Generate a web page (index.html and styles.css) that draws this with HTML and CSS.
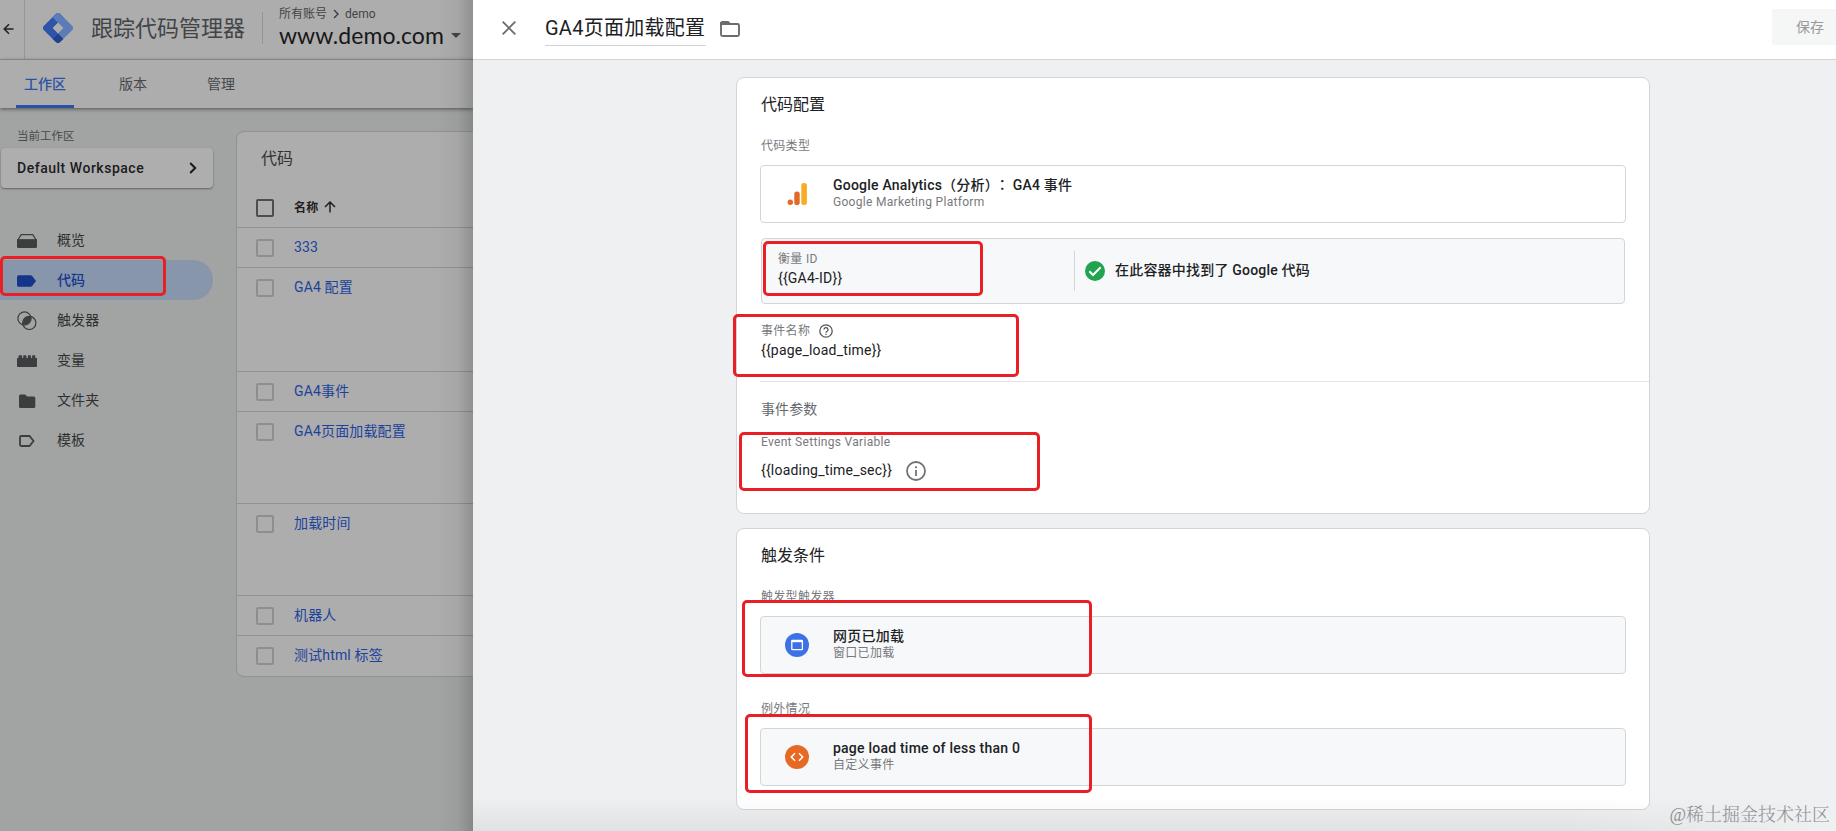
FILE: index.html
```html
<!DOCTYPE html>
<html lang="zh-CN">
<head>
<meta charset="utf-8">
<title>跟踪代码管理器</title>
<link rel="stylesheet" href="styles.css">
</head>
<body>
<div class="app">
  <div class="workspace">
    <header class="topbar">
      <div class="back"><svg width="12" height="12" viewBox="0 0 12 12" fill="none" stroke="#202122" stroke-width="1.5"><path d="M10.5 6H1.5M6 1.2 1.2 6 6 10.8"/></svg></div>
      <svg class="logo" width="30" height="30" viewBox="0 0 30 30"><path d="M12.700 1 1 12.700a3.200 3.200 0 0 0 0 4.600L9.500 25.800 15 20.200 9.800 15 20.700 4.400 17.300 1a3.200 3.200 0 0 0-4.600 0z" fill="#2c55aa"/><path d="M12.700 1a3.200 3.200 0 0 1 4.600 0L29 12.700a3.200 3.200 0 0 1 0 4.600L20.700 25.600 15 20.200 20.200 15 9.500 4.200z" fill="#5b7cb8"/><path d="M9.400 25.700 15 20.200l5.600 5.500-3.300 3.300a3.200 3.200 0 0 1-4.600 0z" fill="#1d418f"/><path d="M15 9.800 20.200 15 15 20.200 9.800 15z" fill="#adadad"/></svg>
      <div class="product">跟踪代码管理器</div>
      <div class="account">
        <div class="crumb">所有账号 <svg width="6" height="10" viewBox="0 0 6 10" fill="none" stroke="#393b3d" stroke-width="1.400"><path d="m1 1 4 4-4 4"/></svg> <span>demo</span></div>
        <div class="site"><span>www.demo.com</span><i class="caret"></i></div>
      </div>
    </header>
    <nav class="tabs"><a class="tab on">工作区</a><a class="tab">版本</a><a class="tab">管理</a></nav>
    <div class="body">
      <aside class="side">
        <div class="ws-label">当前工作区</div>
        <div class="ws-card"><span>Default Workspace</span><svg width="8" height="12" viewBox="0 0 8 12" fill="none" stroke="#18191a" stroke-width="2"><path d="m1.200 1 5 5-5 5"/></svg></div>
        <ul class="menu">
          <li><svg width="20" height="20" viewBox="0 0 20 20"><path d="M4.200 4.600h11.600l3.400 5.400H.8z" fill="none" stroke="#3b3d3e" stroke-width="1.200"/><path d="M0 9.300h20v7.200q0 1.500-1.500 1.500h-17Q0 18 0 16.500z" fill="#3b3d3e"/></svg>概览</li>
          <li class="on"><svg width="20" height="20" viewBox="0 0 20 20"><path d="M1.500 5.200h12q1 0 1.700.8l3.800 5-3.800 5q-.7.800-1.700.800h-12Q0 16.800 0 15.300V6.700q0-1.500 1.500-1.500z" fill="#16358a"/></svg>代码</li>
          <li><svg width="20" height="20" viewBox="0 0 20 20"><g fill="none" stroke="#3b3d3e" stroke-width="1.200"><circle cx="7.500" cy="8.500" r="6.600"/><circle cx="12.300" cy="12.900" r="6.600"/></g><path d="M14 6.600c.6 4.900-2.700 8.200-8.100 8.300-.6-5 2.700-8.400 8.100-8.300z" fill="#3b3d3e"/></svg>触发器</li>
          <li><svg width="20" height="20" viewBox="0 0 20 20"><path d="M0 8h1.500V6q0-.8.800-.8h2q.8 0 .8.800v2h1.100V6q0-.8.800-.8h1.600q.8 0 .8.800v2h1.400V6q0-.8.800-.8h1.600q.8 0 .8.800v2h1.100V6q0-.8.800-.8h1.600q.8 0 .8.800v2H20v8q0 1-1 1H1q-1 0-1-1z" fill="#3b3d3e"/></svg>变量</li>
          <li><svg width="20" height="20" viewBox="0 0 20 20"><path d="M3.500 4.500h4.700l2 2h6.600q1.500 0 1.500 1.500v8.500q0 1.500-1.500 1.500H3.500Q2 18 2 16.500V6q0-1.500 1.500-1.500z" fill="#3b3d3e"/></svg>文件夹</li>
          <li><svg width="20" height="20" viewBox="0 0 20 20"><path d="M4.200 6h8.300l4 5-4 5H4.200q-1.200 0-1.200-1.200V7.200Q3 6 4.200 6z" fill="none" stroke="#3b3d3e" stroke-width="1.800"/></svg>模板</li>
        </ul>
      </aside>
      <section class="list">
        <h2>代码</h2>
        <div class="row head"><i class="box"></i><span>名称</span><svg width="12" height="12" viewBox="0 0 12 12" fill="none" stroke="#1f2021" stroke-width="1.500"><path d="M6 11.500v-10M1 6l5-5 5 5"/></svg></div>
        <div class="row"><i class="box"></i><span>333</span></div>
        <div class="row r104"><i class="box"></i><span>GA4 配置</span></div>
        <div class="row"><i class="box"></i><span>GA4事件</span></div>
        <div class="row r92"><i class="box"></i><span>GA4页面加载配置</span></div>
        <div class="row r92"><i class="box"></i><span>加载时间</span></div>
        <div class="row"><i class="box"></i><span>机器人</span></div>
        <div class="row"><i class="box"></i><span>测试html 标签</span></div>
      </section>
    </div>
    <div class="edge"></div>
  </div>

  <main class="drawer">
    <header class="dhead">
      <svg width="14" height="14" viewBox="0 0 14 14" stroke="#6a6d70" stroke-width="1.900"><path d="m.7.7 12.600 12.600M13.300.7.700 13.300"/></svg>
      <h1>GA4页面加载配置</h1>
      <svg class="folder" width="20" height="16" viewBox="0 0 20 16" fill="none" stroke="#6a6d70" stroke-width="1.900"><path d="M1 2.500V13.500q0 1.500 1.500 1.500h15q1.500 0 1.500-1.500V4.500Q19 3 17.500 3H10L8 1H2.500Q1 1 1 2.500z"/><path d="M1 2h7.500l1 1H1z"/></svg>
      <button class="save">保存</button>
    </header>
    <div class="dbody">
      <section class="card config">
        <h3>代码配置</h3>
        <div class="label">代码类型</div>
        <div class="tile white">
          <svg width="24" height="24" viewBox="0 0 24 24"><rect x="16.300" y="1" width="5.600" height="22" rx="2.500" fill="#f9ab25"/><rect x="9.300" y="9.500" width="5.400" height="13.500" rx="2.600" fill="#e06a26"/><circle cx="5.300" cy="20.300" r="2.700" fill="#e06a26"/></svg>
          <div><b>Google Analytics（分析）<span class="colon" lang="zh-TW">：</span> GA4 事件</b><small>Google Marketing Platform</small></div>
        </div>
        <div class="measure">
          <div class="mid"><small>衡量 ID</small><p>{{GA4-ID}}</p></div>
          <div class="found"><svg width="20" height="20" viewBox="0 0 20 20"><circle cx="10" cy="10" r="10" fill="#22a350"/><path d="m4.300 10.300 3.700 3.700 7.700-7.700" fill="none" stroke="#fff" stroke-width="2"/></svg><b>在此容器中找到了 Google 代码</b></div>
        </div>
        <div class="label ev">事件名称<svg width="14" height="14" viewBox="0 0 14 14" fill="none" stroke="#55585b" stroke-width="1.300"><circle cx="7" cy="7" r="6.200"/><path d="M5 5.600a2 2 0 1 1 3.100 1.700C7.300 7.800 7 8.100 7 8.800M7 9.800v1.300"/></svg></div>
        <p class="value">{{page_load_time}}</p>
        <div class="params">
          <h4>事件参数</h4>
          <div class="label esv">Event Settings Variable</div>
          <p class="value load"><span>{{loading_time_sec}}</span><svg width="20" height="20" viewBox="0 0 20 20" fill="none" stroke="#707376" stroke-width="1.800"><circle cx="10" cy="10" r="9"/><path d="M10 9v6M10 5.200v2"/></svg></p>
        </div>
      </section>
      <section class="card trig">
        <h3>触发条件</h3>
        <div class="label">触发型触发器</div>
        <div class="tile">
          <svg width="24" height="24" viewBox="0 0 24 24"><circle cx="12" cy="12" r="12" fill="#3d72e6"/><rect x="6.800" y="7.500" width="10.600" height="9.200" rx=".8" fill="none" stroke="#fff" stroke-width="1.300"/><path d="M6.500 8.200h11" stroke="#fff" stroke-width="2"/></svg>
          <div><b>网页已加载</b><small>窗口已加载</small></div>
        </div>
        <div class="label exc">例外情况</div>
        <div class="tile">
          <svg width="24" height="24" viewBox="0 0 24 24"><circle cx="12" cy="12" r="12" fill="#e66a23"/><path d="M10 8.300 6.300 12l3.700 3.700M14 8.300l3.700 3.700-3.700 3.700" fill="none" stroke="#fff" stroke-width="1.500"/></svg>
          <div><b>page load time of less than 0</b><small>自定义事件</small></div>
        </div>
      </section>
    </div>
    <div class="fade"></div>
  </main>

  <i class="mark m1"></i><i class="mark m2"></i><i class="mark m3"></i><i class="mark m4"></i><i class="mark m5"></i><i class="mark m6"></i>
  <div class="watermark">@稀土掘金技术社区</div>
</div>
</body>
</html>
```
FILE: styles.css
```css
* { box-sizing: border-box; }
body, h1, h2, h3, h4, p, ul { margin: 0; padding: 0; }
body { font-family: Roboto, "Noto Sans CJK SC", sans-serif; font-size: 14px; color: #202124; overflow: hidden; }
svg { display: block; flex: none; }
i { font-style: normal; }
b { font-weight: 500; }
.app { position: relative; width: 1836px; height: 831px; display: grid; grid-template-columns: 473px 1fr; overflow: hidden; }

/* dimmed page behind the drawer */
.workspace { position: relative; background: #a1a4a3; overflow: hidden; display: flex; flex-direction: column; }
.topbar { height: 60px; background: #adadad; border-bottom: 1px solid #959697; display: flex; align-items: flex-start; white-space: nowrap; }
.back { width: 25px; height: 59px; border-right: 1px solid #959697; padding: 23px 0 0 3px; }
.logo { margin: 13px 0 0 18px; }
.product { margin-left: 18px; width: 154px; font-size: 22px; line-height: 32px; padding-top: 13px; color: #424446; }
.account { margin: 12px 0 0 17px; height: 32px; border-left: 1px solid #949596; padding-left: 16px; }
.crumb { display: flex; align-items: center; gap: 6px; font-size: 12px; line-height: 16px; margin-top: -6px; color: #424446; }
.site { display: flex; align-items: center; line-height: 26px; font-family: Lato, sans-serif; font-size: 23px; letter-spacing: .05px; color: #161718; }
.caret { border: 5px solid transparent; border-top-color: #424446; border-bottom: 0; margin-left: 7px; }
.tabs { height: 48px; flex: none; background: #adadad; display: flex; padding-left: 16px; box-shadow: 0 1px 4px rgba(0,0,0,.5); z-index: 1; }
.tab { height: 48px; line-height: 48px; padding: 0 8px; margin-right: 37px; color: #46484a; }
.tab:nth-child(2) { margin-right: 44px; }
.tab.on { color: #2b51a6; font-weight: 500; border-bottom: 3px solid #2b51a6; }
.body { flex: 1; display: grid; grid-template-columns: 236px 1fr; align-items: start; }
.ws-label { line-height: 16px; padding: 20px 0 0 17px; color: #47494a; font-size: 11.5px; }
.ws-card { margin: 4px 0 0 1px; width: 212px; height: 40px; background: #aeaeae; border-radius: 4px; box-shadow: 0 1px 2px rgba(0,0,0,.4); padding: 0 16px 0 16px; display: flex; align-items: center; justify-content: space-between; font-weight: 500; letter-spacing: .52px; color: #1b1c1d; }
.menu { list-style: none; margin-top: 32px; width: 213px; }
.menu li { height: 40px; padding-left: 17px; display: flex; align-items: center; gap: 20px; line-height: 40px; color: #2e3031; letter-spacing: .1px; }
.menu .on { background: #8896ab; color: #17378c; border-radius: 0 20px 20px 0; font-weight: 500; }
.list { margin-top: 23px; height: 546px; width: 260px; background: #adadad; border: 1px solid #8f9192; border-radius: 8px; }
.list h2 { font-size: 16px; font-weight: 400; line-height: 24px; padding: 15px 0 0 24px; height: 56px; color: #303233; }
.row { height: 40px; border-top: 1px solid #8f9192; padding: 10px 0 0 19px; display: flex; align-items: flex-start; line-height: 18px; color: #1c429c; letter-spacing: .15px; }
.row.head { height: 39px; border-top: 0; color: #1f2021; font-size: 12px; font-weight: 700; padding-top: 10px; }
.row span { margin-left: 20px; }
.row.head span { margin-top: 1px; }
.row.head svg { margin: 3px 0 0 6px; }
.box { width: 18px; height: 18px; margin-top: 1px; border: 2px solid #8d8e8f; border-radius: 2px; flex: none; }
.head .box { border-color: #4b4d4e; }
.r104 { height: 104px; }
.r92 { height: 92px; }
.edge { position: absolute; z-index: 3; top: 0; right: 0; width: 38px; height: 831px; background: linear-gradient(90deg, rgba(0,0,0,0), rgba(0,0,0,.04) 60%, rgba(0,0,0,.17)); }

/* drawer */
.drawer { position: relative; background: #eef0f2; min-width: 0; }
.dhead { height: 60px; background: #fff; border-bottom: 1px solid #d2d4d5; display: flex; align-items: flex-start; padding-left: 29px; }
.dhead > svg { margin-top: 21px; }
.dhead h1 { margin: 10px 0 0 29px; width: 161px; height: 36px; border-bottom: 1px solid #cfd1d3; font-size: 20px; font-weight: 400; line-height: 37px; white-space: nowrap; letter-spacing: .25px; }
.dhead .folder { margin-left: 14px; }
.save { margin: 9px 0 0 auto; width: 64px; height: 36px; border: 0; border-radius: 3px 0 0 3px; background: #f5f6f6; color: #96989a; font: 400 14px/36px Roboto, "Noto Sans CJK SC", sans-serif; text-align: left; padding: 0 0 0 24px; }
.dbody { padding: 17px 0 0 263px; width: 1177px; display: flex; flex-direction: column; gap: 14px; }
.card { background: #fff; border: 1px solid #d3d6d9; border-radius: 8px; padding: 15px 23px 0 23px; }
.config { height: 437px; }
.trig { height: 282px; }
h3 { font-size: 16px; font-weight: 400; line-height: 24px; padding-left: 1px; }
.label { font-size: 12px; letter-spacing: .3px; line-height: 16px; color: #77797c; padding-left: 1px; margin-top: 21px; }
.tile { height: 58px; margin-top: 11px; border: 1px solid #d3d6d9; border-radius: 4px; background: #f7f8fa; display: flex; align-items: center; padding-left: 24px; gap: 24px; }
.tile.white { background: #fff; }
.tile b, .tile small { display: block; white-space: nowrap; }
.tile b { line-height: 18px; letter-spacing: .22px; margin-top: -3px; }
.colon { display: inline-block; width: 15px; margin: 0 -1px 0 -4px; text-align: center; line-height: 18px; font-family: "Noto Sans CJK TC", sans-serif; }
.tile small, .mid small { font-size: 12px; letter-spacing: .3px; line-height: 16px; color: #77797c; }
.measure { margin: 15px 1px 0; height: 66px; border: 1px solid #d3d6d9; border-radius: 4px; background: #f7f8fa; display: flex; padding-top: 12px; }
.mid { width: 313px; height: 40px; border-right: 1px solid #d3d6d9; padding-left: 16px; }
.mid small { display: block; }
.mid p { line-height: 20px; margin-top: 1px; letter-spacing: .2px; }
.found { display: flex; align-items: center; height: 40px; padding-left: 10px; gap: 10px; letter-spacing: .2px; }
.found b { line-height: 20px; margin-top: -2px; }
.ev { margin-top: 19px; display: flex; gap: 9px; align-items: center; }
.value { padding-left: 1px; line-height: 20px; margin-top: 1px; letter-spacing: .2px; }
.params { margin: 21px -23px 0 0; border-top: 1px solid #e2e4e6; }
h4 { font-size: 14px; font-weight: 400; line-height: 20px; color: #66696c; padding: 17px 0 0 1px; letter-spacing: .1px; }
.esv { margin-top: 15px; }
.load { display: flex; gap: 14px; align-items: center; margin-top: 11px; }
.load span { margin-top: -2px; }
.exc { margin-top: 27px; }
.fade { position: absolute; left: 0; bottom: 0; width: 1363px; height: 34px; background: linear-gradient(180deg, rgba(0,0,0,0), rgba(0,0,0,.06)); -webkit-mask-image: linear-gradient(90deg, #000 80%, transparent); mask-image: linear-gradient(90deg, #000 80%, transparent); }

/* annotation frames */
.mark { position: absolute; z-index: 5; border: 3px solid #ea1f25; border-radius: 5px; }
.m1 { left: 0; top: 256px; width: 166px; height: 40px; }
.m2 { left: 763px; top: 241px; width: 220px; height: 55px; }
.m3 { left: 733px; top: 314px; width: 286px; height: 63px; }
.m4 { left: 739px; top: 432px; width: 301px; height: 59px; }
.m5 { left: 742px; top: 600px; width: 350px; height: 77px; }
.m6 { left: 745px; top: 714px; width: 347px; height: 79px; }
.watermark { position: absolute; right: 6px; bottom: 4px; font-family: "Liberation Serif", "Noto Serif CJK SC", "Noto Sans CJK SC", serif; font-size: 18px; line-height: 24px; font-weight: 300; color: #8f9193; white-space: nowrap; }
```
